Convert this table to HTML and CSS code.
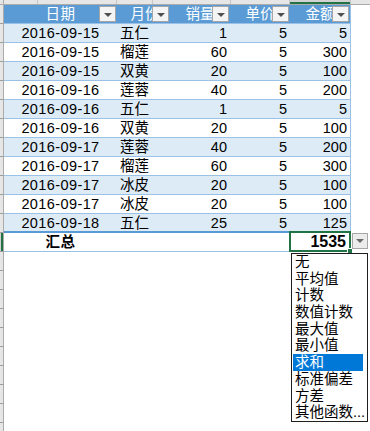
FILE: index.html
```html
<!DOCTYPE html>
<html lang="zh">
<head>
<meta charset="utf-8">
<link rel="stylesheet" href="styles.css">
</head>
<body>
<div class="sheet">
  <div class="colhead">
    <div class="ch ch-corner"></div>
    <div class="ch ch-a"></div>
    <div class="ch ch-b"></div>
    <div class="ch ch-c"></div>
    <div class="ch ch-d"></div>
    <div class="ch ch-e"></div>
    <div class="ch ch-f sel"></div>
    <div class="ch ch-g"></div>
  </div>

  <div class="row">
    <div class="rh"></div>
    <div class="cells head">
      <div class="c date"><span>日期</span><i class="fbtn"></i></div>
      <div class="c month hc"><span>月份</span><i class="fbtn"></i></div>
      <div class="c num hc"><span>销量</span><i class="fbtn"></i></div>
      <div class="c num hc"><span>单价</span><i class="fbtn"></i></div>
      <div class="c num hc"><span>金额</span><i class="fbtn"></i></div>
    </div>
  </div>

  <div class="row"><div class="rh"></div><div class="cells band"><div class="c date">2016-09-15</div><div class="c month">五仁</div><div class="c num">1</div><div class="c num">5</div><div class="c num">5</div></div></div>
  <div class="row"><div class="rh"></div><div class="cells"><div class="c date">2016-09-15</div><div class="c month">榴莲</div><div class="c num">60</div><div class="c num">5</div><div class="c num">300</div></div></div>
  <div class="row"><div class="rh"></div><div class="cells band"><div class="c date">2016-09-15</div><div class="c month">双黄</div><div class="c num">20</div><div class="c num">5</div><div class="c num">100</div></div></div>
  <div class="row"><div class="rh"></div><div class="cells"><div class="c date">2016-09-16</div><div class="c month">莲蓉</div><div class="c num">40</div><div class="c num">5</div><div class="c num">200</div></div></div>
  <div class="row"><div class="rh"></div><div class="cells band"><div class="c date">2016-09-16</div><div class="c month">五仁</div><div class="c num">1</div><div class="c num">5</div><div class="c num">5</div></div></div>
  <div class="row"><div class="rh"></div><div class="cells"><div class="c date">2016-09-16</div><div class="c month">双黄</div><div class="c num">20</div><div class="c num">5</div><div class="c num">100</div></div></div>
  <div class="row"><div class="rh"></div><div class="cells band"><div class="c date">2016-09-17</div><div class="c month">莲蓉</div><div class="c num">40</div><div class="c num">5</div><div class="c num">200</div></div></div>
  <div class="row"><div class="rh"></div><div class="cells"><div class="c date">2016-09-17</div><div class="c month">榴莲</div><div class="c num">60</div><div class="c num">5</div><div class="c num">300</div></div></div>
  <div class="row"><div class="rh"></div><div class="cells band"><div class="c date">2016-09-17</div><div class="c month">冰皮</div><div class="c num">20</div><div class="c num">5</div><div class="c num">100</div></div></div>
  <div class="row"><div class="rh"></div><div class="cells"><div class="c date">2016-09-17</div><div class="c month">冰皮</div><div class="c num">20</div><div class="c num">5</div><div class="c num">100</div></div></div>
  <div class="row"><div class="rh"></div><div class="cells band last"><div class="c date">2016-09-18</div><div class="c month">五仁</div><div class="c num">25</div><div class="c num">5</div><div class="c num">125</div></div></div>

  <div class="row total">
    <div class="rh rh-sel"></div>
    <div class="cells tot">
      <div class="c date b">汇总</div>
      <div class="c month"></div>
      <div class="c num"></div>
      <div class="c num"></div>
      <div class="c num active"><span class="sum">1535</span><i class="handle"></i></div>
    </div>
    <i class="ddbtn"></i>
  </div>

  <div class="row"><div class="rh"></div></div>
  <div class="row"><div class="rh"></div></div>
  <div class="row"><div class="rh"></div></div>
  <div class="row"><div class="rh"></div></div>
  <div class="row"><div class="rh"></div></div>
  <div class="row"><div class="rh"></div></div>
  <div class="row"><div class="rh"></div></div>
  <div class="row"><div class="rh"></div></div>
  <div class="row"><div class="rh"></div></div>
  <div class="row"><div class="rh"></div></div>

  <ul class="menu">
    <li>无</li>
    <li>平均值</li>
    <li>计数</li>
    <li>数值计数</li>
    <li>最大值</li>
    <li>最小值</li>
    <li class="on">求和</li>
    <li>标准偏差</li>
    <li>方差</li>
    <li>其他函数...</li>
  </ul>
</div>
</body>
</html>
```

FILE: styles.css
```css
* { box-sizing: border-box; }
html, body { margin: 0; padding: 0; background: #fff; }
body {
  font-family: "Liberation Sans", "Noto Sans CJK SC", sans-serif;
  font-size: 14.5px;
  color: #000;
  width: 370px;
  height: 431px;
  overflow: hidden;
}
.sheet { position: relative; display: flex; flex-direction: column; }

.colhead {
  display: flex;
  height: 5px;
  background: #e6e6e6;
  border-bottom: 1px solid #ababab;
}
.ch { height: 100%; border-right: 1px solid #c6c6c6; }
.ch-corner { width: 4px; border-right-color: #ababab; }
.ch-a { width: 34px; }
.ch-b { width: 79px; }
.ch-c { width: 36px; }
.ch-d { width: 78px; }
.ch-e { width: 59px; }
.ch-f { width: 61px; }
.ch-f.sel { background: #d2d2d2; box-shadow: inset 0 -2px 0 #217346; }
.ch-g { flex: 1; border-right: none; }

.row { display: flex; height: 19px; position: relative; }
.rh {
  width: 4px;
  flex: none;
  background: #e6e6e6;
  border-right: 1px solid #ababab;
  border-bottom: 1px solid #9e9e9e;
}
.rh-sel { background: #d2d2d2; box-shadow: inset -2px 0 0 #217346; }

.cells {
  display: flex;
  width: 347px;
  height: 19px;
  border-bottom: 1px solid #9bc2e6;
  border-right: 1px solid #9bc2e6;
}
.cells.band { background: #ddebf7; }
.cells.head { background: #5b9bd5; color: #fff; border-bottom-color: #9bc2e6; }
.cells.last { border-bottom: 2px solid #5b9bd5; height: 19px; }

.c {
  position: relative;
  height: 18px;
  line-height: 18px;
  padding: 0 3px;
  white-space: nowrap;
  overflow: hidden;
}
.date { width: 113px; text-align: center; letter-spacing: 0.4px; }
.month { width: 53px; text-align: left; }
.num { width: 60px; text-align: right; }
.hc { text-align: center; }
.month.hc { text-align: center; padding-left: 6px; }
.b { font-weight: bold; }

.fbtn {
  position: absolute;
  right: 1px;
  top: 1px;
  width: 17px;
  height: 16px;
  background: #f4f4f4;
  border: 1px solid #a6a6a6;
}
.fbtn::after, .ddbtn::after {
  content: "";
  position: absolute;
  left: 50%;
  top: 6px;
  margin-left: -4px;
  border-left: 4px solid transparent;
  border-right: 4px solid transparent;
  border-top: 4px solid #505050;
}

.cells.tot { border-right: none; width: 347px; background: #fff; }
.active {
  margin: -2px -1px 0 -1px;
  height: 21px;
  width: 62px;
  border: 2px solid #217346;
  line-height: 17px;
  padding-right: 3px;
  overflow: visible;
}
.sum { font-weight: bold; font-size: 16px; }
.handle {
  position: absolute;
  right: -4px;
  bottom: -4px;
  width: 6px;
  height: 6px;
  background: #217346;
  border: 1px solid #fff;
}
.ddbtn {
  position: absolute;
  left: 352px;
  top: 0px;
  width: 16px;
  height: 16px;
  background: #ececec;
  border: 1px solid #a6a6a6;
}
.ddbtn::after { border-top-color: #6a6a6a; top: 5px; }

.menu {
  position: absolute;
  left: 291px;
  top: 253px;
  width: 77px;
  margin: 0;
  padding: 0 4px 0 1px;
  list-style: none;
  background: #fff;
  border: 1px solid #1e1e1e;
  font-size: 14.5px;
}
.menu li {
  height: 16.7px;
  line-height: 16.7px;
  padding-left: 2px;
  white-space: nowrap;
}
.menu li.on { background: #0078d7; color: #fff; }
```
